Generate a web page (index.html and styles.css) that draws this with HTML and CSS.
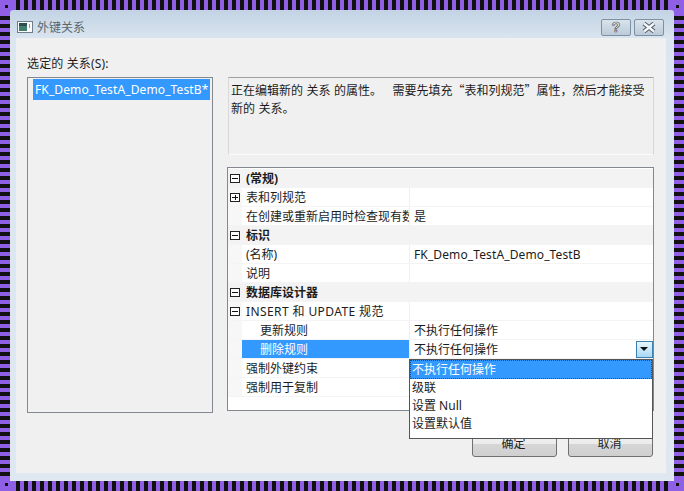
FILE: index.html
```html
<!DOCTYPE html>
<html lang="zh">
<head>
<meta charset="utf-8">
<title>外键关系</title>
<link rel="stylesheet" href="styles.css">
</head>
<body>
<div class="frame">
  <div class="window">
    <header class="titlebar">
      <svg class="app-icon" width="16" height="12" viewBox="0 0 16 12"><rect x="0.5" y="0.5" width="15" height="11" fill="#fbfbfb" stroke="#6d7f8c"/><rect x="2" y="2" width="8" height="8" fill="#3f7f6c"/><rect x="2" y="2" width="8" height="3" fill="#2d4f50"/><rect x="12" y="3" width="1" height="4" fill="#8a9aa5"/></svg>
      <span class="title">外键关系</span>
      <div class="caption-buttons">
        <button class="caption-btn help"><span>?</span></button>
        <button class="caption-btn close"><svg width="18" height="11" viewBox="0 0 18 11"><path d="M4 1.5 L14 9.5 M14 1.5 L4 9.5" stroke="#4e5a66" stroke-width="4.4"/><path d="M4 1.5 L14 9.5 M14 1.5 L4 9.5" stroke="#f4f6f8" stroke-width="2.4"/></svg></button>
      </div>
    </header>
    <main class="content">
      <div class="left">
        <div class="label">选定的 关系(S):</div>
        <div class="listbox"><div class="list-item">FK_Demo_TestA_Demo_TestB*</div></div>
      </div>
      <div class="right">
        <div class="desc">正在编辑新的 关系 的属性。 &nbsp; 需要先填充“表和列规范”属性，然后才能接受<br>新的 关系。</div>
        <div class="grid">
          <div class="row cat"><span class="gutter"><i class="tog minus"></i></span><span class="name">(常规)</span></div>
          <div class="row"><span class="gutter"><i class="tog plus"></i></span><span class="name">表和列规范</span><span class="val"></span></div>
          <div class="row"><span class="gutter"></span><span class="name">在创建或重新启用时检查现有数据</span><span class="val">是</span></div>
          <div class="row cat"><span class="gutter"><i class="tog minus"></i></span><span class="name">标识</span></div>
          <div class="row"><span class="gutter"></span><span class="name">(名称)</span><span class="val latin">FK_Demo_TestA_Demo_TestB</span></div>
          <div class="row"><span class="gutter"></span><span class="name">说明</span><span class="val"></span></div>
          <div class="row cat"><span class="gutter"><i class="tog minus"></i></span><span class="name">数据库设计器</span></div>
          <div class="row"><span class="gutter"><i class="tog minus"></i></span><span class="name wide">INSERT 和 UPDATE 规范</span><span class="val"></span></div>
          <div class="row"><span class="gutter"></span><span class="name sub">更新规则</span><span class="val">不执行任何操作</span></div>
          <div class="row open"><span class="gutter"></span><span class="name sub selected">删除规则</span><span class="val">不执行任何操作<span class="arrow"></span></span>
            <ul class="dropdown">
              <li class="hot">不执行任何操作</li>
              <li>级联</li>
              <li>设置 Null</li>
              <li>设置默认值</li>
            </ul>
          </div>
          <div class="row"><span class="gutter"></span><span class="name">强制外键约束</span><span class="val"></span></div>
          <div class="row"><span class="gutter"></span><span class="name">强制用于复制</span><span class="val"></span></div>
        </div>
        <div class="actions">
          <button class="btn">确定</button>
          <button class="btn">取消</button>
        </div>
      </div>
    </main>
  </div>
</div>
</body>
</html>
```
FILE: styles.css
```css
* { box-sizing: border-box; }
html, body { margin: 0; padding: 0; }
body {
  width: 684px;
  height: 491px;
  overflow: hidden;
  font-family: "Noto Sans", "Noto Sans CJK SC", sans-serif;
  font-size: 12px;
  color: #1c1c1c;
}
.frame {
  width: 684px;
  height: 491px;
  padding: 10px;
  background-color: #8f5fe6;
  background-image:
    linear-gradient(#111, #111), linear-gradient(#111, #111), linear-gradient(#111, #111), linear-gradient(#111, #111),
    linear-gradient(#8f5fe6, #8f5fe6), linear-gradient(#8f5fe6, #8f5fe6), linear-gradient(#8f5fe6, #8f5fe6), linear-gradient(#8f5fe6, #8f5fe6),
    repeating-linear-gradient(90deg, #111 0 4px, #8f5fe6 4px 8px),
    repeating-linear-gradient(90deg, #111 0 4px, #8f5fe6 4px 8px),
    repeating-linear-gradient(180deg, #111 0 4px, #8f5fe6 4px 8px),
    repeating-linear-gradient(180deg, #111 0 4px, #8f5fe6 4px 8px);
  background-size:
    3px 3px, 3px 3px, 3px 3px, 3px 3px,
    12px 12px, 12px 12px, 12px 12px, 12px 12px,
    100% 10px, 100% 10px, 10px 100%, 10px 100%;
  background-position:
    5px 5px, 676px 5px, 5px 483px, 676px 483px,
    0 0, 672px 0, 0 479px, 672px 479px,
    0 0, 0 481px, 0 0, 674px 0;
  background-repeat: no-repeat;
}
.window {
  width: 664px;
  height: 471px;
  background: linear-gradient(180deg, #c2d3e3 0, #dbe6f0 30px, #dfe8f1 100%);
  border-radius: 3px 3px 0 0;
  display: flex;
  flex-direction: column;
  padding: 0 8px 8px 6px;
}
.titlebar {
  height: 28px;
  flex: none;
  display: flex;
  align-items: center;
  padding: 4px 0 0 1px;
}
.app-icon { flex: none; margin-top: 2px; }
.title { margin: 2px 0 0 4px; font-size: 12px; color: #5a6670; }
.caption-buttons { margin-left: auto; display: flex; gap: 3px; margin-top: 3px; margin-right: 2px; }
.caption-btn {
  width: 30px;
  height: 17px;
  padding: 0;
  border: 1px solid #7f90a2;
  border-radius: 2px;
  background: linear-gradient(180deg, #d9e3ec, #bccbd9);
  display: flex;
  align-items: center;
  justify-content: center;
}
.help span {
  font: bold 14px "Liberation Sans", sans-serif;
  color: #f4f6f8;
  -webkit-text-stroke: 0.7px #4e5a66;
  line-height: 15px;
}
.content {
  flex: 1;
  min-height: 0;
  background: #f0f0f0;
  display: flex;
  padding: 0 12px 0 11px;
  gap: 14px;
}
.left { width: 186px; flex: none; display: flex; flex-direction: column; }
.label { height: 39px; padding-top: 19px; line-height: 13px; font-size: 12px; letter-spacing: 0.15px; }
.listbox {
  height: 336px;
  border: 1px solid #828790;
  padding: 1px 2px 0 5px;
}
.list-item {
  height: 21px;
  line-height: 21px;
  background: #3399ff;
  color: #fff;
  padding-left: 2px;
  letter-spacing: 0.12px;
  white-space: nowrap;
  overflow: hidden;
}
.right { flex: 1; min-width: 0; display: flex; flex-direction: column; position: relative; }
.desc {
  height: 78px;
  margin: 39px 0 12px 1px;
  padding: 3px 2px 0 2px;
  line-height: 18px;
  word-spacing: 0.8px;
  font-family: "Noto Sans CJK SC", "Noto Sans", sans-serif;
  border: 1px solid #fbfbfb;
  border-top-color: #a0a0a0;
  border-left-color: #d8d8d8;
  border-right-color: #d8d8d8;
  white-space: nowrap;
  overflow: hidden;
}
.grid {
  height: 244px;
  border: 1px solid #828790;
  background: #fff;
  padding-top: 1px;
}
.row {
  height: 19px;
  display: flex;
  position: relative;
  line-height: 20px;
  border-bottom: 1px solid #f4f4f4;
}
.gutter {
  width: 14px;
  flex: none;
  display: flex;
  align-items: center;
  padding-left: 2px;
  background: #f7f7f7;
}
.name {
  width: 168px;
  flex: none;
  padding-left: 4px;
  white-space: nowrap;
  overflow: hidden;
  border-right: 1px solid #f0f0f0;
}
.name.sub { padding-left: 18px; }
.name.wide { letter-spacing: 0.4px; }
.name.selected { background: #3399ff; color: #fff; }
.val { flex: 1; padding-left: 4px; white-space: nowrap; position: relative; }
.val.latin { letter-spacing: 0.12px; }
.cat { background: #f3f3f3; }
.cat .gutter { background: #f3f3f3; }
.cat .name { font-weight: 700; border-right: 0; width: auto; }
.tog {
  width: 10px;
  height: 9px;
  border: 1px solid #222;
  display: block;
  background:
    linear-gradient(#111, #111) center / 6px 1px no-repeat,
    #fff;
}
.tog.plus {
  background:
    linear-gradient(#111, #111) center / 6px 1px no-repeat,
    linear-gradient(#111, #111) center / 1px 5px no-repeat,
    #fff;
}
.arrow {
  position: absolute;
  right: 0;
  top: 1px;
  width: 17px;
  height: 17px;
  border: 1px solid #3c7fb1;
  background: linear-gradient(180deg, #eaf6fd, #a7d9f5);
}
.arrow::after {
  content: "";
  position: absolute;
  left: 3px;
  top: 5px;
  border-style: solid;
  border-width: 4px 4px 0;
  border-color: #111 transparent transparent;
}
.dropdown {
  position: absolute;
  z-index: 2;
  left: 181px;
  top: 19px;
  width: 244px;
  height: 80px;
  margin: 0;
  padding: 0;
  list-style: none;
  line-height: 18px;
  background: #fff;
  border: 1px solid #555;
}
.dropdown li { height: 18px; line-height: 18px; padding-left: 2px; }
.dropdown li.hot { height: 19px; line-height: 19px; background: #3399ff; color: #fff; outline: 1px dotted #1c4f80; outline-offset: -1px; }
.actions {
  display: flex;
  justify-content: flex-end;
  gap: 11px;
  padding: 20px 1px 0 0;
}
.btn {
  width: 85px;
  height: 26px;
  padding: 0 2px 3px 0;
  font: inherit;
  color: #1c1c1c;
  border: 1px solid #707070;
  border-radius: 3px;
  background: linear-gradient(180deg, #f2f2f2 0, #ebebeb 50%, #d6d6d6 51%, #cfcfcf 100%);
}
```
